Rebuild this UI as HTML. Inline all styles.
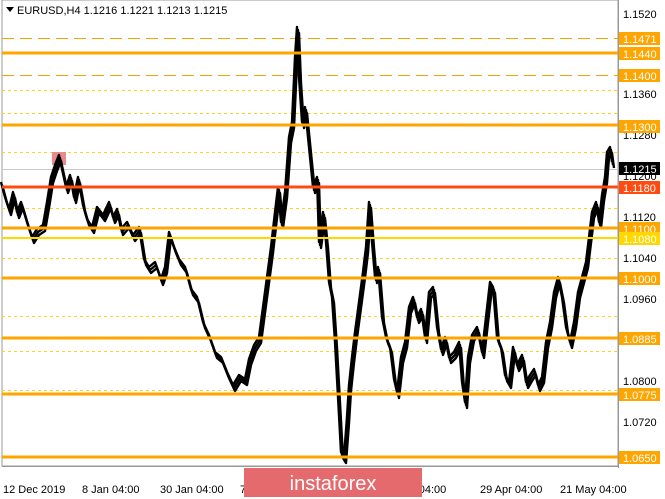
<!DOCTYPE html>
<html><head><meta charset="utf-8"><style>
body{margin:0;width:665px;height:499px;overflow:hidden;background:#fff;font-family:"Liberation Sans",sans-serif}
</style></head><body>
<svg width="665" height="499" xmlns="http://www.w3.org/2000/svg" style="position:absolute;left:0;top:0">
<rect x="2" y="0" width="616" height="466" fill="#fff" stroke="#999" stroke-width="1"/>
<g stroke-width="1" fill="none">
<line x1="2" y1="38.5" x2="618" y2="38.5" stroke="#f5a300" stroke-dasharray="12,6"/>
<line x1="2" y1="75.5" x2="618" y2="75.5" stroke="#f5a300" stroke-dasharray="12,6"/>
<line x1="2" y1="90.5" x2="618" y2="90.5" stroke="#ffd21e" stroke-dasharray="3,3"/>
<line x1="2" y1="113.5" x2="618" y2="113.5" stroke="#ffd21e" stroke-dasharray="3,3"/>
<line x1="2" y1="152.5" x2="618" y2="152.5" stroke="#ffd21e" stroke-dasharray="3,3"/>
<line x1="2" y1="169.5" x2="618" y2="169.5" stroke="#c8c8c8"/>
<line x1="2" y1="208.5" x2="618" y2="208.5" stroke="#ffd21e" stroke-dasharray="3,3"/>
<line x1="2" y1="258.5" x2="618" y2="258.5" stroke="#ffd21e" stroke-dasharray="3,3"/>
<line x1="2" y1="316.5" x2="618" y2="316.5" stroke="#ffd21e" stroke-dasharray="3,3"/>
<line x1="2" y1="351.5" x2="618" y2="351.5" stroke="#ffd21e" stroke-dasharray="3,3"/>
<line x1="2" y1="390.5" x2="618" y2="390.5" stroke="#ffd21e" stroke-dasharray="3,3"/>
</g>
<rect x="52" y="152" width="14" height="13" fill="#e88a8a"/>
<g fill="none" stroke="#000" stroke-linejoin="round">
<polyline id="p" stroke-width="2.4" points="
2,185 6,200 10,212 14,195 18,215 22,205 28,225 33,240 38,232 44,228 48,205 52,180 56,168 60,158 63,172 67,190 71,178 75,200 79,180 84,208 88,222 93,230 98,210 104,218 110,205 114,220 118,212 122,232 128,225 134,238 140,230 145,262 150,270 156,265 162,282 166,270 170,235 175,250 180,262 186,270 192,292 198,300 204,325 210,338 216,355 222,360 228,375 234,388 240,378 246,382 250,362 255,348 260,340 264,310 268,280 272,250 276,215 279,190 282,225 286,195 290,140 293,125 296,60 298,30 300,80 303,125 306,110 310,150 314,190 318,180 320,245 324,215 327,245 330,285 333,300 336,345 339,400 342,455 345,460 348,420 350,388 353,360 356,335 360,305 364,275 367,250 370,205 373,245 376,280 379,270 383,320 387,340 391,350 395,382 398,395 402,360 406,345 410,310 414,300 418,320 422,312 426,340 430,295 434,290 438,330 442,352 446,340 450,360 455,355 460,345 463,385 466,405 469,360 473,338 478,330 483,355 487,320 491,285 494,290 498,340 502,350 506,378 510,385 514,350 518,368 523,358 527,385 531,378 535,372 539,388 543,380 547,345 551,325 555,295 559,280 563,300 567,330 571,345 575,325 579,295 583,280 587,265 590,240 593,215 597,205 600,225 603,198 606,180 608,155 611,150 613,165"/>
<use href="#p" transform="translate(1,3)" stroke-width="1.2"/>
<use href="#p" transform="translate(-1,-3)" stroke-width="1.2"/>
</g>
<g stroke-width="3">
<line x1="2" y1="53" x2="618" y2="53" stroke="#ffa500"/>
<line x1="2" y1="125" x2="618" y2="125" stroke="#ffa500"/>
<line x1="2" y1="228" x2="618" y2="228" stroke="#ffa500"/>
<line x1="2" y1="278" x2="618" y2="278" stroke="#ffa500"/>
<line x1="2" y1="338" x2="618" y2="338" stroke="#ffa500"/>
<line x1="2" y1="394" x2="618" y2="394" stroke="#ffa500"/>
<line x1="2" y1="457" x2="618" y2="457" stroke="#ffa500"/>
<line x1="2" y1="238" x2="618" y2="238" stroke="#ffd800" stroke-width="2"/>
<line x1="2" y1="187" x2="618" y2="187" stroke="#ff4a10"/>
</g>
<line x1="618.5" y1="0" x2="618.5" y2="468" stroke="#999"/>
<line x1="2" y1="466.5" x2="618" y2="466.5" stroke="#999"/>
<g font-size="11" fill="#000">
<text x="623" y="18">1.1520</text>
<text x="623" y="98">1.1360</text>
<text x="623" y="139">1.1280</text>
<text x="623" y="180">1.1200</text>
<text x="623" y="221">1.1120</text>
<text x="623" y="262">1.1040</text>
<text x="623" y="303">1.0960</text>
<text x="623" y="385">1.0800</text>
<text x="623" y="426">1.0720</text>
</g>
<g font-size="11" fill="#fff">
<rect x="619" y="32" width="41" height="13" fill="#ffa500"/><text x="623" y="43">1.1471</text>
<rect x="619" y="47" width="41" height="13" fill="#ffa500"/><text x="623" y="58">1.1440</text>
<rect x="619" y="69" width="41" height="13" fill="#ffa500"/><text x="623" y="80">1.1400</text>
<rect x="619" y="120" width="41" height="13" fill="#ffa500"/><text x="623" y="131">1.1300</text>
<rect x="619" y="162" width="41" height="13" fill="#000"/><text x="623" y="173">1.1215</text>
<rect x="619" y="181" width="41" height="13" fill="#ff4a10"/><text x="623" y="192">1.1180</text>
<rect x="619" y="222" width="41" height="13" fill="#ffa500"/><text x="623" y="233">1.1100</text>
<rect x="619" y="232" width="41" height="13" fill="#ffd800"/><text x="623" y="243">1.1080</text>
<rect x="619" y="272" width="41" height="13" fill="#ffa500"/><text x="623" y="283">1.1000</text>
<rect x="619" y="332" width="41" height="13" fill="#ffa500"/><text x="623" y="343">1.0885</text>
<rect x="619" y="388" width="41" height="13" fill="#ffa500"/><text x="623" y="399">1.0775</text>
<rect x="619" y="451" width="41" height="13" fill="#ffa500"/><text x="623" y="462">1.0650</text>
</g>
<g font-size="11" fill="#000">
<text x="3" y="493">12 Dec 2019</text>
<text x="82" y="493">8 Jan 04:00</text>
<text x="160" y="493">30 Jan 04:00</text>
<text x="240" y="493">7</text>
<text x="412" y="493">r 04:00</text>
<text x="480" y="493">29 Apr 04:00</text>
<text x="560" y="493">21 May 04:00</text>
</g>
<path d="M6 7 L14 7 L10 12 Z" fill="#000"/>
<text x="17" y="14" font-size="11" fill="#000">EURUSD,H4  1.1216 1.1221 1.1213 1.1215</text>
<rect x="244" y="468" width="178" height="29" fill="#e46a6e"/>
<text x="333" y="490" font-size="20" fill="#fff" text-anchor="middle">instaforex</text>
</svg>
</body></html>
